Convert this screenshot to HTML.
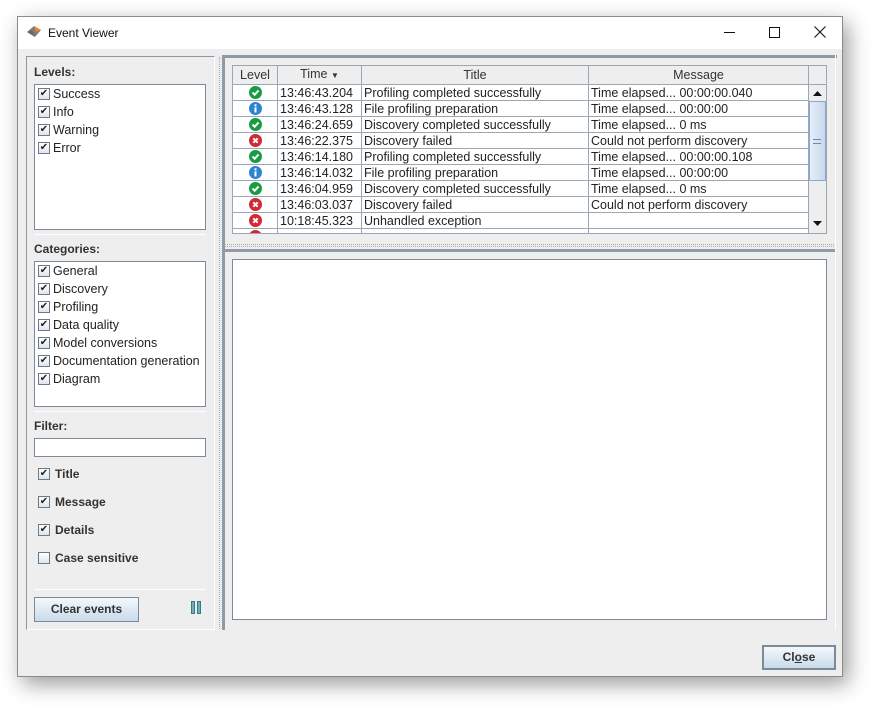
<!DOCTYPE html>
<html><head><style>
*{box-sizing:border-box;margin:0;padding:0}
body{width:892px;height:725px;background:#fff;font-family:"Liberation Sans",sans-serif;font-size:12px;color:#222;position:relative;overflow:hidden}
.a{position:absolute}
.win{left:17px;top:16px;width:826px;height:661px;background:#eeeeee;border:1px solid #8a8a8a;box-shadow:5px 7px 20px rgba(0,0,0,.4)}
.tb{left:0;top:0;width:824px;height:32px;background:#fff}
.lbl{font-weight:bold;color:#333}
.box{background:#fff;border:1px solid #7a8a99}
.cb{width:12px;height:12px;border:1px solid #6a7a8a;background:linear-gradient(#fff,#dde6ee);font-size:10px;line-height:10px;text-align:center;color:#222;flex:none}
.li{display:flex;align-items:center;height:18px;gap:3px;font-size:12.5px}
.sep{height:1px;background:#7f93ad;border-bottom:1px solid #fff}
.btn{border:1px solid #7a8a99;background:linear-gradient(#f4f8fc,#c9daea);font-weight:bold;text-align:center;color:#333}
table{border-collapse:collapse;font-size:12.5px}
td,th{border:1px solid #9aa8b6;height:16px;padding:0 2px;white-space:nowrap;overflow:hidden;line-height:14px}
th{background:#eeeeee;font-weight:normal;height:19px;color:#333}
td{background:#fff}
.ic{display:block;margin:0 auto}
</style></head><body>
<div class="a win">
 <div class="a tb">
  <svg class="a" style="left:8px;top:7px" width="16" height="14"><path d="M1 8 L8 2 L15 6 L9 13 Z" fill="#8a7a70"/><path d="M8 2 L15 6 L10 8 Z" fill="#e08a3a"/><path d="M1 8 L6 6 L9 13Z" fill="#5a6a88"/></svg>
  <div class="a" style="left:30px;top:9px;font-size:12px;color:#111">Event Viewer</div>
  <div class="a" style="left:706px;top:15px;width:11px;height:1px;background:#111"></div>
  <div class="a" style="left:751px;top:10px;width:11px;height:11px;border:1px solid #111"></div>
  <svg class="a" style="left:796px;top:9px" width="12" height="12"><path d="M0.5 0.5L11.5 11.5M11.5 0.5L0.5 11.5" stroke="#111" stroke-width="1.1"/></svg>
 </div>
 <!-- left panel -->
 <div class="a" style="left:8px;top:39px;width:189px;height:574px;border:1px solid #8a98a8;border-right-color:#fff;border-bottom-color:#fff"></div>
 <div class="a lbl" style="left:16px;top:48px">Levels:</div>
 <div class="a box" style="left:16px;top:67px;width:172px;height:146px"></div>
 <div class="a" style="left:20px;top:68px">
  <div class="li"><span class="cb">✔</span>Success</div>
  <div class="li"><span class="cb">✔</span>Info</div>
  <div class="li"><span class="cb">✔</span>Warning</div>
  <div class="li"><span class="cb">✔</span>Error</div>
 </div>
 <div class="a sep" style="left:16px;top:217px;width:172px"></div>
 <div class="a lbl" style="left:16px;top:225px">Categories:</div>
 <div class="a box" style="left:16px;top:244px;width:172px;height:146px"></div>
 <div class="a" style="left:20px;top:245px">
  <div class="li"><span class="cb">✔</span>General</div>
  <div class="li"><span class="cb">✔</span>Discovery</div>
  <div class="li"><span class="cb">✔</span>Profiling</div>
  <div class="li"><span class="cb">✔</span>Data quality</div>
  <div class="li"><span class="cb">✔</span>Model conversions</div>
  <div class="li"><span class="cb">✔</span>Documentation generation</div>
  <div class="li"><span class="cb">✔</span>Diagram</div>
 </div>
 <div class="a sep" style="left:16px;top:394px;width:172px"></div>
 <div class="a lbl" style="left:16px;top:402px">Filter:</div>
 <div class="a box" style="left:16px;top:421px;width:172px;height:19px"></div>
 <div class="a cb" style="left:20px;top:451px">✔</div><div class="a lbl" style="left:37px;top:450px">Title</div>
 <div class="a cb" style="left:20px;top:479px">✔</div><div class="a lbl" style="left:37px;top:478px">Message</div>
 <div class="a cb" style="left:20px;top:507px">✔</div><div class="a lbl" style="left:37px;top:506px">Details</div>
 <div class="a cb" style="left:20px;top:535px"></div><div class="a lbl" style="left:37px;top:534px">Case sensitive</div>
 <div class="a sep" style="left:16px;top:572px;width:172px"></div>
 <div class="a btn" style="left:16px;top:580px;width:105px;height:25px;line-height:23px">Clear events</div>
 <div class="a" style="left:173px;top:584px;width:4px;height:13px;background:#6fb0b8;border:1px solid #3a7a88"></div>
 <div class="a" style="left:179px;top:584px;width:4px;height:13px;background:#6fb0b8;border:1px solid #3a7a88"></div>
 <!-- splitter -->
 <div class="a" style="left:201px;top:40px;width:2px;height:572px;border-left:1px dotted #aaa"></div>
 <div class="a" style="left:204px;top:38px;width:3px;height:575px;background:#8e9aa6"></div>
 <div class="a" style="left:205px;top:38px;width:614px;height:3px;background:#8e9aa6"></div>
 <!-- table -->
 <div class="a" style="left:214px;top:48px;width:595px;height:169px;border:1px solid #9aa8b6;background:#fff;overflow:hidden">
  <table style="width:576px;table-layout:fixed;margin-left:-1px;margin-top:-1px">
   <colgroup><col style="width:45px"><col style="width:84px"><col style="width:227px"><col style="width:220px"></colgroup>
   <tr><th>Level</th><th>Time <span style="font-size:8px">▼</span></th><th>Title</th><th>Message</th></tr>
   <tr><td><svg class="ic" width="13" height="13"><circle cx="6.5" cy="6.5" r="6.5" fill="#1a9a44"/><path d="M3.5 6.5L5.7 8.7L9.5 4.5" stroke="#fff" stroke-width="2" fill="none"/></svg></td><td>13:46:43.204</td><td>Profiling completed successfully</td><td>Time elapsed... 00:00:00.040</td></tr>
   <tr><td><svg class="ic" width="13" height="13"><circle cx="6.5" cy="6.5" r="6.5" fill="#2a86d0"/><rect x="5.5" y="2.3" width="2" height="2" fill="#fff"/><rect x="5.5" y="5.3" width="2" height="5.2" fill="#fff"/></svg></td><td>13:46:43.128</td><td>File profiling preparation</td><td>Time elapsed... 00:00:00</td></tr>
   <tr><td><svg class="ic" width="13" height="13"><circle cx="6.5" cy="6.5" r="6.5" fill="#1a9a44"/><path d="M3.5 6.5L5.7 8.7L9.5 4.5" stroke="#fff" stroke-width="2" fill="none"/></svg></td><td>13:46:24.659</td><td>Discovery completed successfully</td><td>Time elapsed... 0 ms</td></tr>
   <tr><td><svg class="ic" width="13" height="13"><circle cx="6.5" cy="6.5" r="6.5" fill="#d02a35"/><path d="M4.3 4.3L8.7 8.7M8.7 4.3L4.3 8.7" stroke="#fff" stroke-width="2"/></svg></td><td>13:46:22.375</td><td>Discovery failed</td><td>Could not perform discovery</td></tr>
   <tr><td><svg class="ic" width="13" height="13"><circle cx="6.5" cy="6.5" r="6.5" fill="#1a9a44"/><path d="M3.5 6.5L5.7 8.7L9.5 4.5" stroke="#fff" stroke-width="2" fill="none"/></svg></td><td>13:46:14.180</td><td>Profiling completed successfully</td><td>Time elapsed... 00:00:00.108</td></tr>
   <tr><td><svg class="ic" width="13" height="13"><circle cx="6.5" cy="6.5" r="6.5" fill="#2a86d0"/><rect x="5.5" y="2.3" width="2" height="2" fill="#fff"/><rect x="5.5" y="5.3" width="2" height="5.2" fill="#fff"/></svg></td><td>13:46:14.032</td><td>File profiling preparation</td><td>Time elapsed... 00:00:00</td></tr>
   <tr><td><svg class="ic" width="13" height="13"><circle cx="6.5" cy="6.5" r="6.5" fill="#1a9a44"/><path d="M3.5 6.5L5.7 8.7L9.5 4.5" stroke="#fff" stroke-width="2" fill="none"/></svg></td><td>13:46:04.959</td><td>Discovery completed successfully</td><td>Time elapsed... 0 ms</td></tr>
   <tr><td><svg class="ic" width="13" height="13"><circle cx="6.5" cy="6.5" r="6.5" fill="#d02a35"/><path d="M4.3 4.3L8.7 8.7M8.7 4.3L4.3 8.7" stroke="#fff" stroke-width="2"/></svg></td><td>13:46:03.037</td><td>Discovery failed</td><td>Could not perform discovery</td></tr>
   <tr><td><svg class="ic" width="13" height="13"><circle cx="6.5" cy="6.5" r="6.5" fill="#d02a35"/><path d="M4.3 4.3L8.7 8.7M8.7 4.3L4.3 8.7" stroke="#fff" stroke-width="2"/></svg></td><td>10:18:45.323</td><td>Unhandled exception</td><td></td></tr>
   <tr><td><svg class="ic" width="13" height="13"><circle cx="6.5" cy="6.5" r="6.5" fill="#d02a35"/></svg></td><td></td><td></td><td></td></tr>
  </table>
  <div class="a" style="left:575px;top:0;width:19px;height:19px;background:#eeeeee;border-left:1px solid #9aa8b6;border-bottom:1px solid #9aa8b6"></div>
  <div class="a" style="left:575px;top:19px;width:19px;height:148px;background:#eeeeee;border-left:1px solid #9aa8b6"></div>
  <svg class="a" style="left:580px;top:25px" width="9" height="6"><path d="M0 5L4.5 0L9 5Z" fill="#111"/></svg>
  <div class="a" style="left:576px;top:35px;width:17px;height:80px;background:linear-gradient(90deg,#e6eef8,#c8d8ec);border:1px solid #8aa8d0"></div>
  <div class="a" style="left:580px;top:73px;width:8px;height:5px;border-top:1px solid #6a88b0;border-bottom:1px solid #6a88b0"></div>
  <svg class="a" style="left:580px;top:155px" width="9" height="6"><path d="M0 0L4.5 5L9 0Z" fill="#111"/></svg>
 </div>
 <div class="a" style="left:206px;top:227px;width:612px;height:3px;border-top:1px dotted #aaa;border-bottom:1px dotted #aaa"></div>
 <div class="a" style="left:206px;top:232px;width:612px;height:3px;background:#8e9aa6"></div>
 <div class="a box" style="left:214px;top:242px;width:595px;height:361px"></div>
 <div class="a" style="left:806px;top:38px;width:12px;height:575px;border-right:1px solid #fff"></div>
 <div class="a btn" style="left:744px;top:628px;width:74px;height:25px;line-height:21px;border:2px solid #7a8a99">Cl<u>o</u>se</div>
</div>
</body></html>
